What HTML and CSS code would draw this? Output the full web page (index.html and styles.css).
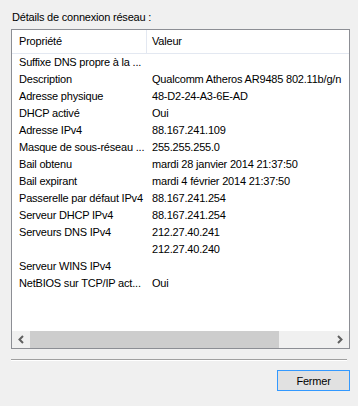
FILE: index.html
```html
<!DOCTYPE html>
<html lang="fr">
<head>
    <meta charset="UTF-8">
    <title>Détails de connexion réseau</title>
    <link rel="stylesheet" href="styles.css">
</head>
<body>
    <div class="label">Détails de connexion réseau :</div>

    <div class="list">
        <div class="inner">
            <div class="head">
                <div class="hcell first">Propriété</div>
                <div class="hcell">Valeur</div>
            </div>
            <div class="row"><span>Suffixe DNS propre à la ...</span><span></span></div>
            <div class="row"><span>Description</span><span>Qualcomm Atheros AR9485 802.11b/g/n</span></div>
            <div class="row"><span>Adresse physique</span><span>48-D2-24-A3-6E-AD</span></div>
            <div class="row"><span>DHCP activé</span><span>Oui</span></div>
            <div class="row"><span>Adresse IPv4</span><span>88.167.241.109</span></div>
            <div class="row"><span>Masque de sous-réseau ...</span><span>255.255.255.0</span></div>
            <div class="row"><span>Bail obtenu</span><span>mardi 28 janvier 2014 21:37:50</span></div>
            <div class="row"><span>Bail expirant</span><span>mardi 4 février 2014 21:37:50</span></div>
            <div class="row"><span>Passerelle par défaut IPv4</span><span>88.167.241.254</span></div>
            <div class="row"><span>Serveur DHCP IPv4</span><span>88.167.241.254</span></div>
            <div class="row"><span>Serveurs DNS IPv4</span><span>212.27.40.241</span></div>
            <div class="row"><span></span><span>212.27.40.240</span></div>
            <div class="row"><span>Serveur WINS IPv4</span><span></span></div>
            <div class="row"><span>NetBIOS sur TCP/IP act...</span><span>Oui</span></div>
        </div>
        <div class="hscroll">
            <div class="arrow">
                <svg width="8" height="9" viewBox="0 0 8 9"><path d="M6 1 L2.5 4.5 L6 8" fill="none" stroke="#606060" stroke-width="2"/></svg>
            </div>
            <div class="thumb"></div>
            <div class="track"></div>
            <div class="arrow">
                <svg width="8" height="9" viewBox="0 0 8 9"><path d="M2 1 L5.5 4.5 L2 8" fill="none" stroke="#606060" stroke-width="2"/></svg>
            </div>
        </div>
    </div>

    <div class="sep"></div>

    <div class="buttons">
        <button class="close" type="button">Fermer</button>
    </div>
</body>
</html>
```

FILE: styles.css
```css
body {
    margin: 0;
    padding: 0;
    background-color: #f0f0f0;
    font-family: "Liberation Sans", Arial, sans-serif;
    font-size: 11px;
    letter-spacing: -0.2px;
    color: #000;
}

.label {
    padding: 11px 0 0 12px;
    line-height: 13px;
    height: 13px;
    margin-bottom: 5px;
}

.list {
    margin-left: 11px;
    width: 339px;
    height: 320px;
    box-sizing: border-box;
    border: 1px solid #8c8e94;
    background-color: #fff;
    display: flex;
    flex-direction: column;
    overflow: hidden;
}

.inner {
    flex: 1;
    width: 420px;
    overflow: hidden;
}

.head {
    display: flex;
    height: 23px;
    border-bottom: 1px solid #e3e8f1;
}

.hcell {
    line-height: 23px;
    padding-left: 5px;
    white-space: nowrap;
}

.hcell.first {
    width: 127px;
    padding-left: 7px;
    border-right: 1px solid #e3e8f1;
}

.row {
    display: grid;
    grid-template-columns: 135px 1fr;
    height: 17px;
    line-height: 17px;
    white-space: nowrap;
}

.row span:first-child {
    padding-left: 7px;
}

.row span:last-child {
    padding-left: 5px;
}

.hscroll {
    display: flex;
    height: 17px;
    background-color: #f0f0f0;
}

.arrow {
    width: 18px;
    display: flex;
    align-items: center;
    justify-content: center;
}

.thumb {
    width: 249px;
    background-color: #cdcdcd;
}

.track {
    flex: 1;
}

.sep {
    margin: 10px 0 0 11px;
    width: 336px;
    border-top: 1px solid #a0a0a0;
    border-bottom: 1px solid #fff;
}

.buttons {
    display: flex;
    justify-content: flex-end;
    padding: 9px 8px 0 0;
}

.close {
    width: 73px;
    height: 21px;
    box-sizing: border-box;
    border: 1px solid #3399ff;
    background-color: #e1e1e1;
    font-family: "Liberation Sans", Arial, sans-serif;
    font-size: 11px;
    letter-spacing: -0.2px;
    color: #000;
    padding: 0;
}
```
